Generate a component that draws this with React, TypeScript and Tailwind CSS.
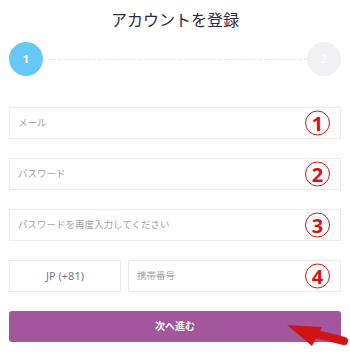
const font = { fontFamily: '"Noto Sans", "Noto Sans CJK JP", sans-serif' };

const Mark = ({ n }: { n: number }) => (
  <div className="absolute right-[10px] top-1/2 -translate-y-1/2 w-[25px] h-[25px] rounded-full border-[1.5px] border-[#d01414] flex items-center justify-center text-[#d01414] font-bold text-[20px] leading-none">
    {n}
  </div>
);

const Field = ({ placeholder, n }: { placeholder: string; n: number }) => (
  <div className="relative h-[32px] border border-[#ebebeb] bg-white flex items-center px-[8px]">
    <span className="text-[9.5px] text-[#a8a0a6]">{placeholder}</span>
    <Mark n={n} />
  </div>
);

export default function App() {
  return (
    <div className="w-[350px] h-[353px] bg-white px-[9px] pt-[8px] overflow-hidden" style={font}>
      <h1 className="text-center text-[16px] leading-[24px] text-[#35283f]">アカウントを登録</h1>

      <div className="flex items-center mt-[10px]">
        <div className="w-[34px] h-[34px] rounded-full bg-[#66c9f5] flex items-center justify-center text-white text-[11px] font-bold">
          1
        </div>
        <div className="flex-1 border-t border-dashed border-[#e4e4ea]" />
        <div className="w-[34px] h-[34px] rounded-full bg-[#f1f1f4] flex items-center justify-center text-[#fafafa] text-[11px] font-bold">
          2
        </div>
      </div>

      <div className="flex flex-col gap-[19px] mt-[31px]">
        <Field placeholder="メール" n={1} />
        <Field placeholder="パスワード" n={2} />
        <Field placeholder="パスワードを再度入力してください" n={3} />
        <div className="flex gap-[7px]">
          <div className="w-[112px] h-[32px] border border-[#ebebeb] flex items-center justify-center text-[11px] text-[#8a6f88]">
            JP (+81)
          </div>
          <div className="relative flex-1 h-[32px] border border-[#ebebeb] flex items-center px-[8px]">
            <span className="text-[9.5px] text-[#a8a0a6]">携帯番号</span>
            <Mark n={4} />
          </div>
        </div>
        <div className="relative">
          <button className="w-full h-[31px] rounded-[3px] bg-[#a3569b] text-white text-[10px] font-bold">
            次へ進む
          </button>
          <svg className="absolute left-[269px] top-[10px]" width="72" height="40" viewBox="0 0 72 40">
            <polygon points="9,4 44,6 34,25" fill="#d01414" />
            <line x1="34" y1="12" x2="66" y2="20" stroke="#d01414" strokeWidth="8" strokeLinecap="round" />
          </svg>
        </div>
      </div>
    </div>
  );
}
